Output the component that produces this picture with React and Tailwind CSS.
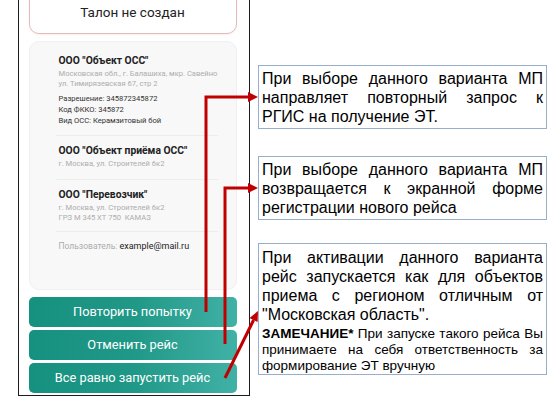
import React from "react";

const Sep = () => <div className="h-px bg-[#ececec] mr-[10px]" />;

function Card() {
  return (
    <div className="mt-[7px] h-[249px] rounded-[10px] bg-[#f8f8f8] border border-[#f0f0f0] pl-[26px] pr-[8px] pt-[12px] font-['Roboto',sans-serif]">
      <div className="pl-[3px]">
        <div className="text-[10.3px] leading-[14px] font-bold text-[#222]">ООО "Объект ОСС"</div>
        <div className="mt-[1px] text-[7.6px] leading-[10px] text-[#adadad] whitespace-nowrap">
          <div>Московская обл., г. Балашиха, мкр. Савейно</div>
          <div>ул. Тимирязевская 67, стр 2</div>
        </div>
        <div className="mt-[4px] text-[7.6px] leading-[11px] text-[#333]">
          <div>Разрешение: 345872345872</div>
          <div>Код ФККО: 345872</div>
          <div>Вид ОСС: Керамзитовый бой</div>
        </div>
      </div>
      <div className="mt-[9px]"><Sep /></div>
      <div className="pl-[3px] mt-[8px]">
        <div className="text-[10.3px] leading-[14px] font-bold text-[#222]">ООО "Объект приёма ОСС"</div>
        <div className="mt-[1px] text-[7.6px] leading-[10px] text-[#adadad]">г. Москва, ул. Строителей 6к2</div>
      </div>
      <div className="mt-[10px]"><Sep /></div>
      <div className="pl-[3px] mt-[8px]">
        <div className="text-[10.3px] leading-[14px] font-bold text-[#222]">ООО "Перевозчик"</div>
        <div className="mt-[1px] text-[7.6px] leading-[10px] text-[#adadad]">
          <div>г. Москва, ул. Строителей 6к2</div>
          <div>ГРЗ М 345 ХТ 750&nbsp; КАМАЗ</div>
        </div>
      </div>
      <div className="mt-[8px]"><Sep /></div>
      <div className="pl-[3px] mt-[8px] text-[8.5px] leading-[12px]">
        <span className="text-[#adadad]">Пользователь: </span>
        <span className="text-[#222] text-[9px]">example@mail.ru</span>
      </div>
    </div>
  );
}

function Btn({ children }) {
  return (
    <div className="h-[30px] rounded-[5px] bg-linear-to-r from-[#17917f] via-[#1f9887] to-[#40b1a6] flex items-center justify-center text-white text-[12.8px] font-['Roboto',sans-serif]">
      {children}
    </div>
  );
}

function Callout({ className, children }) {
  return (
    <div className={"border border-[#97afcc] px-[3px] font-['Liberation_Sans',Arial,sans-serif] text-black text-justify " + className}>
      {children}
    </div>
  );
}

export default function App() {
  return (
    <div className="relative w-[560px] h-[404px] bg-white overflow-hidden flex">
      <div className="ml-[18px] w-[232px] h-[396px] border-x-[1.5px] border-b-[1.5px] border-[#1c1c1c] pl-[9.5px] pr-[12.5px] flex flex-col bg-white">
        <div className="-mt-[10px] h-[44px] shrink-0 rounded-[10px] border border-[#e9b9b9] shadow-[0_1px_2px_rgba(0,0,0,0.06)] flex items-center justify-center pt-[1px] font-['Roboto',sans-serif] text-[13.5px] text-[#222]">
          Талон не создан
        </div>
        <Card />
        <div className="mt-[7px] flex flex-col gap-[3px]">
          <Btn>Повторить попытку</Btn>
          <Btn>Отменить рейс</Btn>
          <Btn>Все равно запустить рейс</Btn>
        </div>
      </div>

      <div className="ml-[8px] w-[289px] pt-[65px] flex flex-col">
        <Callout className="h-[64px] pt-[3px] text-[16px] leading-[19px]">
          При выборе данного варианта МП направляет повторный запрос к РГИС на получение ЭТ.
        </Callout>
        <Callout className="mt-[27px] h-[64px] pt-[3px] text-[16px] leading-[19px]">
          При выборе данного варианта МП возвращается к экранной форме регистрации нового рейса
        </Callout>
        <Callout className="mt-[23px] h-[132px] pt-[3.5px]">
          <p className="text-[16px] leading-[19.2px]">
            При активации данного варианта рейс запускается как для объектов приема с регионом отличным от "Московская область".
          </p>
          <p className="mt-[2px] text-[13.5px] leading-[16px]">
            <b>ЗАМЕЧАНИЕ*</b> При запуске такого рейса Вы принимаете на себя ответственность за формирование ЭТ вручную
          </p>
        </Callout>
      </div>

      <svg className="absolute inset-0 pointer-events-none" width="560" height="404" viewBox="0 0 560 404">
        <g stroke="#c00000" strokeWidth="3" fill="none" strokeLinejoin="miter">
          <path d="M206 312 V97 H250" />
          <path d="M225 344 V188 H250" />
          <path d="M225 378 L253.6 320" />
        </g>
        <g fill="#c00000">
          <polygon points="258,97 248,92 248,102" />
          <polygon points="258,188 248,183 248,193" />
          <polygon points="258,311 257.6,322 249.5,318" />
        </g>
      </svg>
    </div>
  );
}
